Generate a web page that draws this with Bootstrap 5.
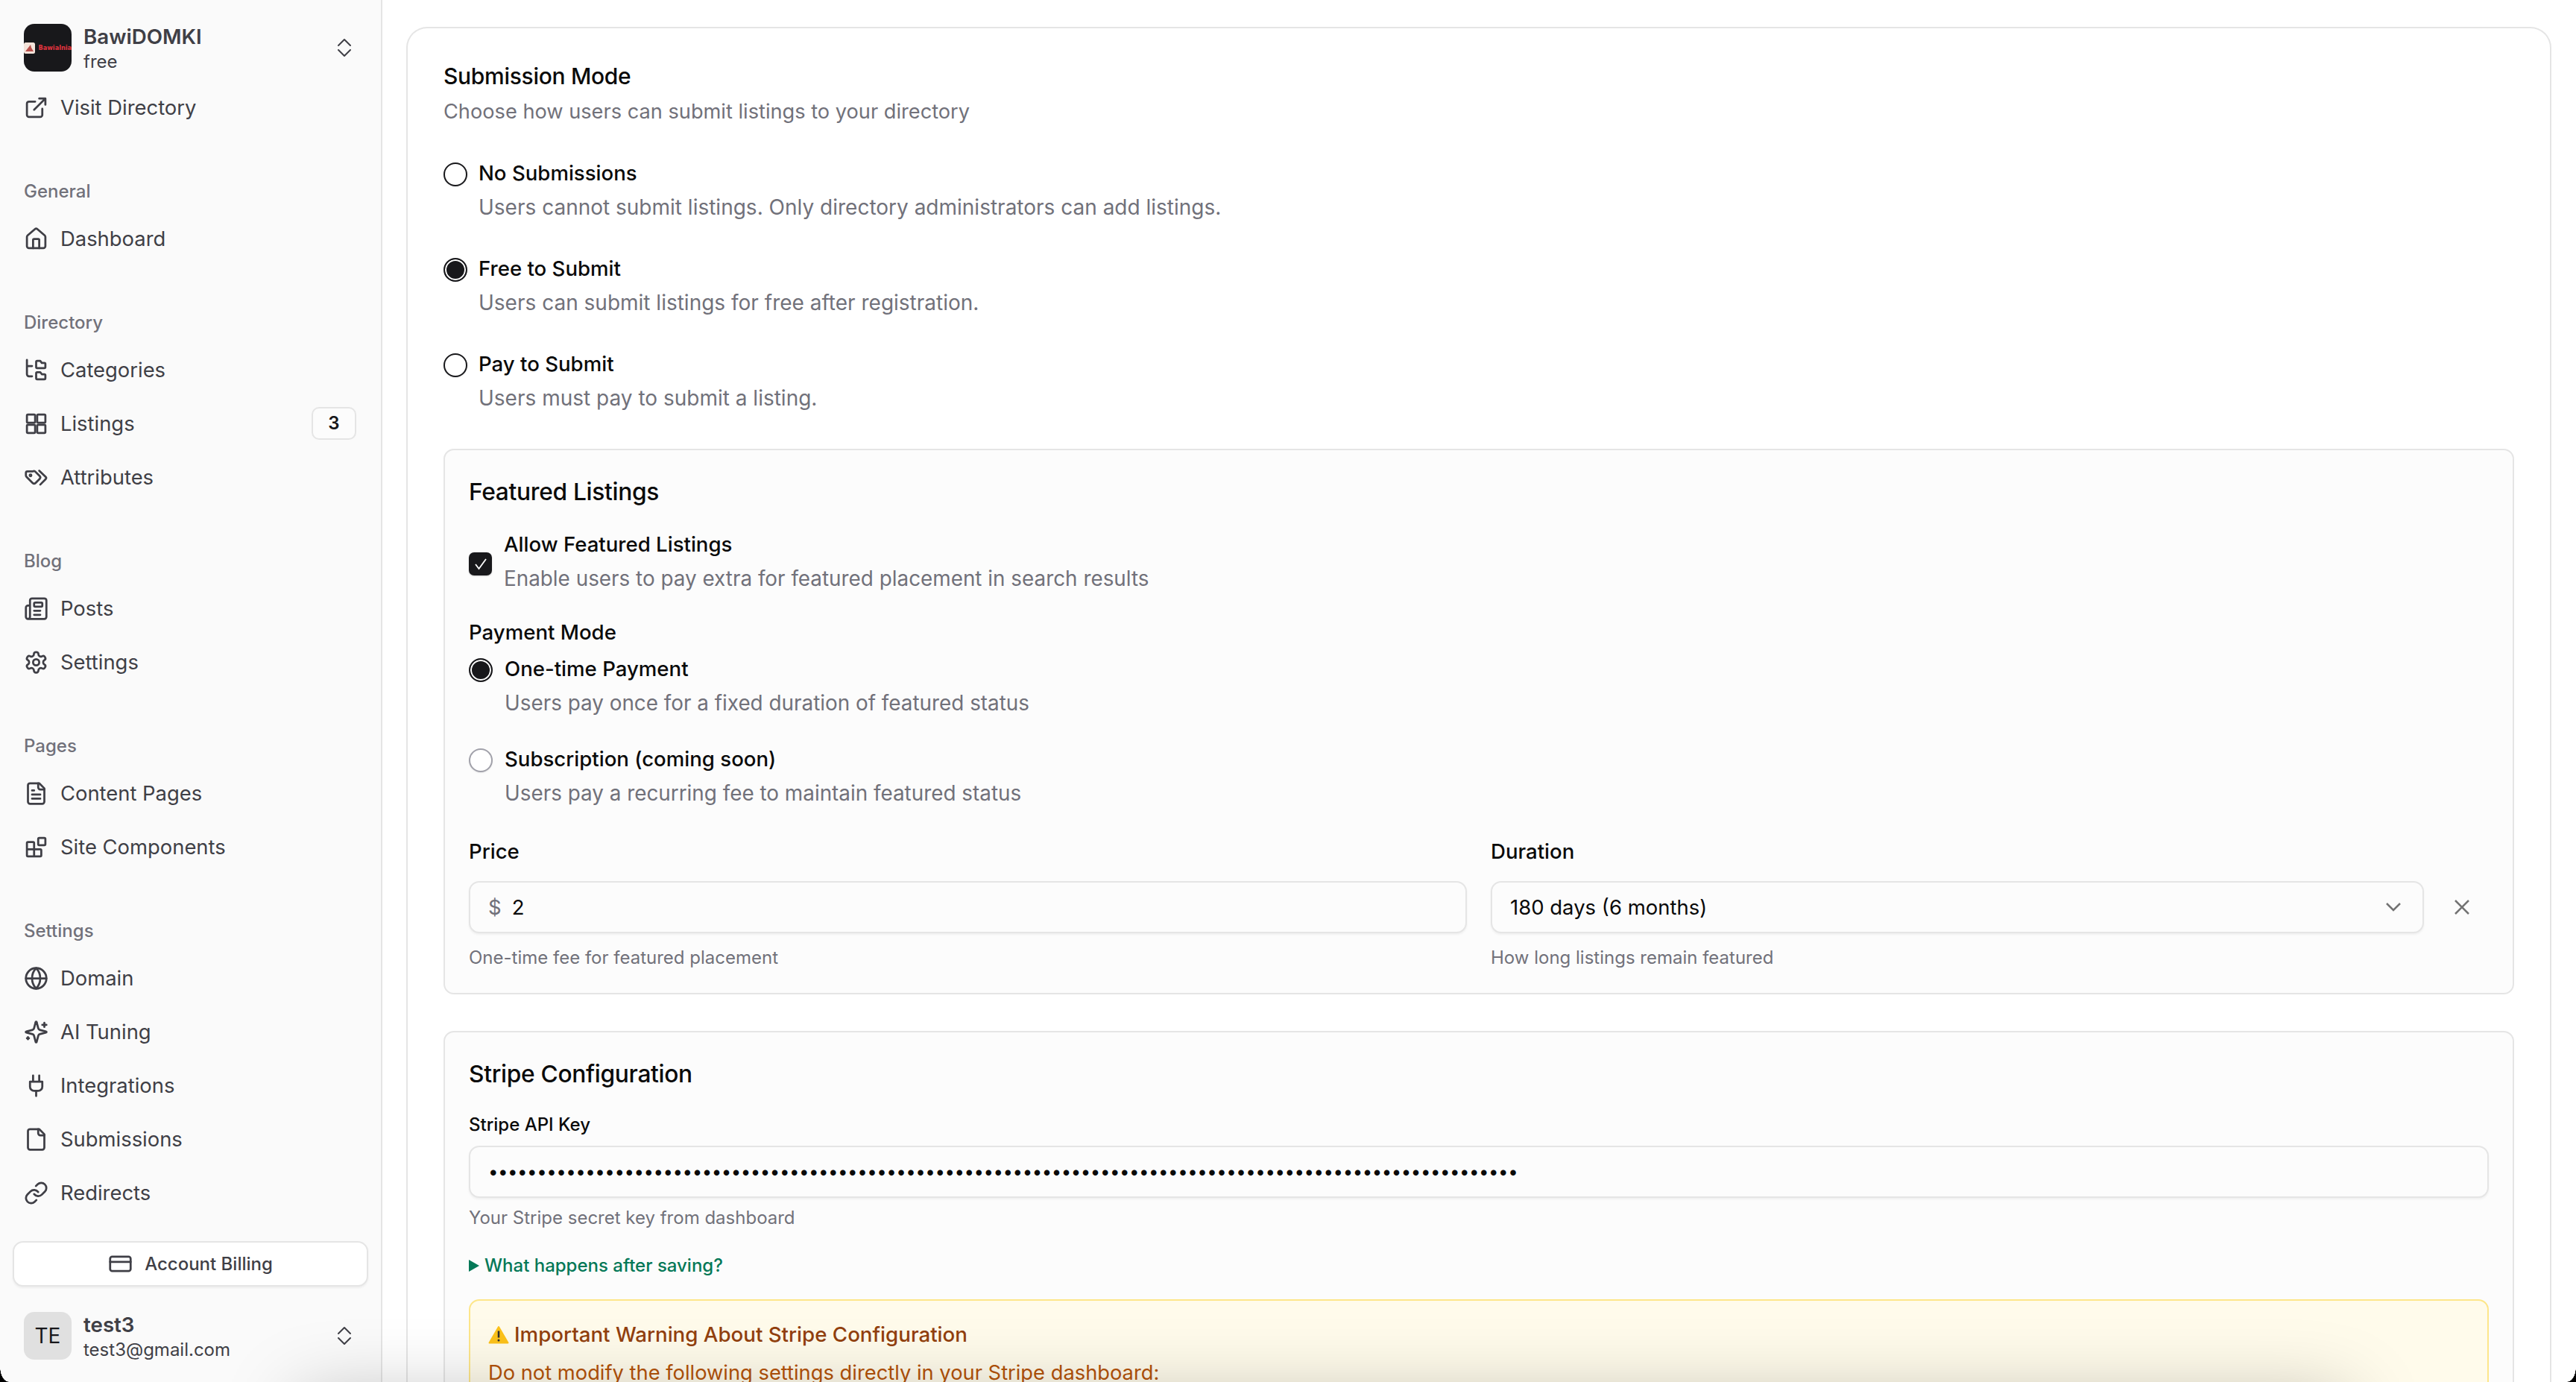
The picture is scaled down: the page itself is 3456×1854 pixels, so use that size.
<!doctype html>
<html lang="en">
<head>
<meta charset="utf-8">
<title>Submission settings</title>
<link href="https://cdn.jsdelivr.net/npm/bootstrap@5.3.0/dist/css/bootstrap.min.css" rel="stylesheet">
<style>
html,body{height:100%;overflow:hidden;}
body{font-family:Inter,"Liberation Sans",sans-serif;font-size:27.85px;line-height:46px;color:#0a0a0a;background:#fff;}
.shell{height:1854px;position:relative;overflow:hidden;}
.rail{width:513px;flex:0 0 513px;background:#fafafa;border-right:2px solid #e5e5e5;padding:32px 32px 30px;color:#3f3f46;}
.rail svg{fill:none;stroke:currentColor;stroke-width:2;stroke-linecap:round;stroke-linejoin:round;}
.who{height:64px;gap:16px;}
.logo-tile{width:64px;height:64px;border-radius:14px;background:#18181b;overflow:hidden;flex:none;}
.logo-tile svg{display:block;stroke:none;}
.logo-text{font-family:"DejaVu Sans",sans-serif;font-weight:700;font-size:8.2px;fill:#e5343f;stroke:none;}
.who-text{padding-top:4px;}
.who-name{font-size:27.7px;font-weight:600;line-height:34px;color:#3f3f46;}
.who-sub{font-size:24px;line-height:34px;color:#3f3f46;}
.nav-row{height:72px;gap:16px;color:#3f3f46;text-decoration:none;font-size:27.4px;}
.nav-row svg{width:33px;height:33px;flex:none;}
.nav-head{height:54px;line-height:54px;font-size:24px;font-weight:500;color:#71717a;margin-top:50px;}
.count-tag{margin-left:auto;width:60px;height:44px;border:2px solid #e5e5e5;border-radius:10px;background:#fcfcfc;font-size:24px;font-weight:600;color:#18181b;margin-right:1px;}
.bill-btn{margin:0 -15px;height:61px;border:2px solid #e5e5e5;border-radius:14px;background:#fff;gap:16px;font-size:24px;font-weight:500;color:#3f3f46;box-shadow:0 2px 3px rgba(0,0,0,.05);}
.bill-btn svg{width:33px;height:33px;}
.initials{width:64px;height:64px;border-radius:14px;background:#e0e0e0;color:#18181b;font-size:28px;flex:none;}
.chev{margin-right:6px;flex:none;}
.stage{flex:1;padding:36px 33px 0 32px;min-width:0;}
.sheet{border:2px solid #e5e5e5;border-bottom:0;border-radius:28px 28px 0 0;padding:41px 48px 0;background:#fff;height:2200px;}
.ttl{font-size:30px;font-weight:550;line-height:46px;letter-spacing:-.3px;margin:0;color:#0a0a0a;}
.sub{color:#71717a;line-height:46px;}
.sub.lead-in{font-size:27.2px;margin-top:2px;margin-bottom:36px;}
.sub.wide{font-size:28px;}
.pick{gap:16px;margin-bottom:36px;}
.pick.first-set{gap:15px;}
.pick:last-child{margin-bottom:0;}
.dot{width:32px;height:32px;border-radius:50%;border:2px solid #18181b;background:#fff;flex:none;margin-top:9px;box-shadow:0 1px 2px rgba(0,0,0,.08);}
.dot.on{background:#18181b;box-shadow:inset 0 0 0 2px #fff;}
.dot.off{border-color:#a1a1aa;}
.pick-name{font-size:27.6px;font-weight:450;line-height:46px;color:#0a0a0a;}
.panel{margin-top:45px;border:2px solid #e5e5e5;border-radius:14px;background:#fcfcfc;padding:33px 32px 32px;}
.panel.one{height:732px;}
.panel.two{margin-top:49px;height:900px;padding-top:33px;}
.panel-ttl{font-size:31.7px;font-weight:500;line-height:46px;margin:0;letter-spacing:-.3px;}
.tick{width:31px;height:31px;border-radius:7px;background:#18181b;flex:none;box-shadow:0 1px 2px rgba(0,0,0,.2);margin-top:6px;}
.tick svg{display:block;}
.pick.tight{gap:16px;margin-bottom:0;}
.field-lbl{font-size:27.6px;font-weight:450;line-height:46px;color:#0a0a0a;}
.box-in{height:70px;border:2px solid #e5e5e5;border-radius:14px;background:#fcfcfc;box-shadow:0 2px 3px rgba(0,0,0,.05);padding:0 24px;font-size:27.5px;}
.box-in.pad-r{padding-right:28px;}
.hint{font-size:24px;line-height:34px;color:#71717a;}
.dollar{color:#71717a;margin-right:14px;}
.close-x{width:32px;height:32px;color:#737373;flex:none;}
.small-lbl{font-size:24px;font-weight:450;line-height:34px;}
.bullets{font-size:24px;letter-spacing:-.47px;line-height:1;color:#0a0a0a;white-space:nowrap;}
.what{font-size:24px;font-weight:500;color:#047857;line-height:34px;}
.tri{display:inline-block;width:0;height:0;border-left:14px solid #047857;border-top:8px solid transparent;border-bottom:8px solid transparent;margin-right:7px;}
.warnbox{margin-top:28px;border:2px solid #fde68a;border-radius:14px;background:#fffbeb;padding:22px 24px;height:300px;}
.warn-ttl{font-size:27.7px;font-weight:450;color:#92400e;line-height:46px;}
.warn-ttl svg{margin-right:7px;}
.warn-txt{font-size:27.3px;color:#b45309;line-height:46px;margin-top:6px;}
.dim{position:absolute;left:400px;width:2750px;top:1874px;height:120px;pointer-events:none;background:rgba(0,0,0,.25);box-shadow:0 0 100px rgba(0,0,0,.25);}
.corner{position:absolute;bottom:0;width:12px;height:20px;pointer-events:none;}
.corner.l{left:0;background:radial-gradient(ellipse 12px 20px at 100% 0,transparent 97%,#000 100%);}
.corner.r{right:0;background:radial-gradient(ellipse 12px 20px at 0 0,transparent 97%,#000 100%);}
</style>
</head>
<body>
<div class="shell d-flex">
<aside class="rail d-flex flex-column">
  <div class="who d-flex align-items-center">
    <div class="logo-tile">
      <svg width="64" height="64" viewBox="0 0 64 64"><rect x="0" y="25" width="15" height="15" rx="2.500" fill="#f3e3da"/><path d="M2 37l7-9 1 4 3 5z" fill="#b9504c"/><text class="logo-text" x="19.500" y="35">Bawialnia</text></svg>
    </div>
    <div class="flex-grow-1 who-text"><div class="who-name">BawiDOMKI</div><div class="who-sub">free</div></div>
    <svg class="chev" width="22" height="26" viewBox="0 0 22 26"><path d="M3 10l8-8 8 8M3 16l8 8 8-8"/></svg>
  </div>
  <a class="nav-row d-flex align-items-center" style="margin-top:12px"><svg viewBox="0 0 24 24"><path d="M18 13v6a2 2 0 0 1-2 2H5a2 2 0 0 1-2-2V8a2 2 0 0 1 2-2h6M15 3h6v6M10 14L21 3"/></svg>Visit Directory</a>

  <div class="nav-head">General</div>
  <a class="nav-row d-flex align-items-center"><svg viewBox="0 0 24 24"><path d="M3 10a2 2 0 0 1 .7-1.500l7-6a2 2 0 0 1 2.600 0l7 6A2 2 0 0 1 21 10v9a2 2 0 0 1-2 2H5a2 2 0 0 1-2-2z"/><path d="M9 21v-8a1 1 0 0 1 1-1h4a1 1 0 0 1 1 1v8"/></svg>Dashboard</a>

  <div class="nav-head">Directory</div>
  <a class="nav-row d-flex align-items-center"><svg viewBox="0 0 24 24"><path d="M3 2v14a2 2 0 0 0 2 2h3M3 8h5"/><path d="M13 3h3l1.500 2H20a1 1 0 0 1 1 1v3a1 1 0 0 1-1 1h-7a1 1 0 0 1-1-1V4a1 1 0 0 1 1-1zM13 14h3l1.500 2H20a1 1 0 0 1 1 1v3a1 1 0 0 1-1 1h-7a1 1 0 0 1-1-1v-5a1 1 0 0 1 1-1z"/></svg>Categories</a>
  <a class="nav-row d-flex align-items-center"><svg viewBox="0 0 24 24"><rect x="3" y="3" width="8" height="8" rx="1"/><rect x="13" y="3" width="8" height="8" rx="1"/><rect x="3" y="13" width="8" height="8" rx="1"/><rect x="13" y="13" width="8" height="8" rx="1"/></svg>Listings<span class="count-tag d-flex align-items-center justify-content-center">3</span></a>
  <a class="nav-row d-flex align-items-center"><svg viewBox="0 0 24 24"><path d="M9 6H3.500A1.500 1.500 0 0 0 2 7.500V10a2 2 0 0 0 .6 1.400l6 6a2 2 0 0 0 2.800 0l4-4a2 2 0 0 0 0-2.800l-4.500-4.500A2 2 0 0 0 9 6z"/><path d="M15 5.500l6.300 6a1.500 1.500 0 0 1 0 2.100L16 19"/><circle cx="6.500" cy="10" r=".8"/></svg>Attributes</a>

  <div class="nav-head">Blog</div>
  <a class="nav-row d-flex align-items-center"><svg viewBox="0 0 24 24"><path d="M4 22h16a2 2 0 0 0 2-2V4a2 2 0 0 0-2-2H8a2 2 0 0 0-2 2v16a2 2 0 0 1-4 0V11a2 2 0 0 1 2-2h2"/><path d="M16 14H10M16 18H10"/><rect x="10" y="6" width="8" height="4" rx="1"/></svg>Posts</a>
  <a class="nav-row d-flex align-items-center"><svg viewBox="0 0 24 24"><path d="M12.220 2h-.44a2 2 0 0 0-2 2v.18a2 2 0 0 1-1 1.730l-.43.25a2 2 0 0 1-2 0l-.15-.08a2 2 0 0 0-2.730.73l-.22.380a2 2 0 0 0 .73 2.730l.15.1a2 2 0 0 1 1 1.720v.510a2 2 0 0 1-1 1.740l-.15.09a2 2 0 0 0-.73 2.730l.22.380a2 2 0 0 0 2.730.73l.15-.08a2 2 0 0 1 2 0l.43.25a2 2 0 0 1 1 1.730V20a2 2 0 0 0 2 2h.44a2 2 0 0 0 2-2v-.18a2 2 0 0 1 1-1.730l.43-.25a2 2 0 0 1 2 0l.15.08a2 2 0 0 0 2.730-.73l.22-.390a2 2 0 0 0-.73-2.730l-.15-.08a2 2 0 0 1-1-1.740v-.500a2 2 0 0 1 1-1.740l.15-.09a2 2 0 0 0 .73-2.730l-.22-.380a2 2 0 0 0-2.730-.73l-.15.08a2 2 0 0 1-2 0l-.43-.25a2 2 0 0 1-1-1.730V4a2 2 0 0 0-2-2z"/><circle cx="12" cy="12" r="3"/></svg>Settings</a>

  <div class="nav-head">Pages</div>
  <a class="nav-row d-flex align-items-center"><svg viewBox="0 0 24 24"><path d="M15 2H6a2 2 0 0 0-2 2v16a2 2 0 0 0 2 2h12a2 2 0 0 0 2-2V7z"/><path d="M14 2v4a2 2 0 0 0 2 2h4M16 13H8M16 17H8M10 9H8"/></svg>Content Pages</a>
  <a class="nav-row d-flex align-items-center"><svg viewBox="0 0 24 24"><rect x="14" y="3" width="7" height="7" rx="1"/><path d="M10 21V8a1 1 0 0 0-1-1H4a1 1 0 0 0-1 1v12a1 1 0 0 0 1 1h12a1 1 0 0 0 1-1v-5a1 1 0 0 0-1-1H3"/></svg>Site Components</a>

  <div class="nav-head">Settings</div>
  <a class="nav-row d-flex align-items-center"><svg viewBox="0 0 24 24"><circle cx="12" cy="12" r="10"/><path d="M12 2a14.500 14.500 0 0 0 0 20 14.500 14.500 0 0 0 0-20M2 12h20"/></svg>Domain</a>
  <a class="nav-row d-flex align-items-center"><svg viewBox="0 0 24 24"><path d="M9.900 15.500A2 2 0 0 0 8.500 14.100l-6.100-1.600a.5.500 0 0 1 0-1l6.100-1.600A2 2 0 0 0 9.900 8.500l1.600-6.100a.5.500 0 0 1 1 0l1.600 6.100a2 2 0 0 0 1.400 1.400l6.100 1.600a.5.500 0 0 1 0 1l-6.100 1.600a2 2 0 0 0-1.400 1.400l-1.600 6.100a.5.500 0 0 1-1 0z"/><path d="M20 3v4M22 5h-4M4 17v2M5 18H3"/></svg>AI Tuning</a>
  <a class="nav-row d-flex align-items-center"><svg viewBox="0 0 24 24"><path d="M12 22v-5M9 8V2M15 8V2M18 8v5a4 4 0 0 1-4 4h-4a4 4 0 0 1-4-4V8z"/></svg>Integrations</a>
  <a class="nav-row d-flex align-items-center"><svg viewBox="0 0 24 24"><path d="M15 2H6a2 2 0 0 0-2 2v16a2 2 0 0 0 2 2h12a2 2 0 0 0 2-2V7z"/><path d="M14 2v4a2 2 0 0 0 2 2h4"/></svg>Submissions</a>
  <a class="nav-row d-flex align-items-center"><svg viewBox="0 0 24 24"><path d="M10 13a5 5 0 0 0 7.540.540l3-3a5 5 0 0 0-7.070-7.070l-1.720 1.710"/><path d="M14 11a5 5 0 0 0-7.540-.540l-3 3a5 5 0 0 0 7.070 7.070l1.710-1.710"/></svg>Redirects</a>

  <div class="mt-auto">
    <div class="bill-btn d-flex align-items-center justify-content-center"><svg viewBox="0 0 24 24"><rect x="2" y="5" width="20" height="14" rx="2"/><path d="M2 10h20"/></svg>Account Billing</div>
    <div class="who d-flex align-items-center" style="margin-top:34px">
      <div class="initials d-flex align-items-center justify-content-center">TE</div>
      <div class="flex-grow-1 who-text"><div class="who-name">test3</div><div class="who-sub">test3@gmail.com</div></div>
      <svg class="chev" width="22" height="26" viewBox="0 0 22 26"><path d="M3 10l8-8 8 8M3 16l8 8 8-8"/></svg>
    </div>
  </div>
</aside>

<main class="stage">
  <div class="sheet">
    <h2 class="ttl">Submission Mode</h2>
    <div class="sub lead-in">Choose how users can submit listings to your directory</div>

    <div>
      <div class="pick first-set d-flex"><span class="dot"></span><div><div class="pick-name">No Submissions</div><div class="sub wide">Users cannot submit listings. Only directory administrators can add listings.</div></div></div>
      <div class="pick first-set d-flex"><span class="dot on"></span><div><div class="pick-name">Free to Submit</div><div class="sub wide">Users can submit listings for free after registration.</div></div></div>
      <div class="pick first-set d-flex"><span class="dot"></span><div><div class="pick-name">Pay to Submit</div><div class="sub wide">Users must pay to submit a listing.</div></div></div>
    </div>

    <section class="panel one">
      <h3 class="panel-ttl" style="margin-bottom:24px">Featured Listings</h3>
      <div class="pick tight d-flex align-items-center"><span class="tick"><svg width="31" height="31" viewBox="0 0 31 31"><path d="M9 16l4.500 6L23 9" fill="none" stroke="#fff" stroke-width="1.800"/></svg></span><div><div class="pick-name">Allow Featured Listings</div><div class="sub">Enable users to pay extra for featured placement in search results</div></div></div>
      <div class="field-lbl" style="margin-top:26px">Payment Mode</div>
      <div class="pick d-flex" style="margin:3px 0 29px"><span class="dot on"></span><div><div class="pick-name">One-time Payment</div><div class="sub">Users pay once for a fixed duration of featured status</div></div></div>
      <div class="pick d-flex" style="margin-bottom:32px"><span class="dot off"></span><div><div class="pick-name">Subscription (coming soon)</div><div class="sub">Users pay a recurring fee to maintain featured status</div></div></div>
      <div class="d-flex align-items-start">
        <div style="width:1339px;margin-right:32px">
          <div class="field-lbl" style="margin-bottom:17px">Price</div>
          <div class="box-in d-flex align-items-center"><span class="dollar">$</span>2</div>
          <div class="hint" style="margin-top:16px">One-time fee for featured placement</div>
        </div>
        <div style="width:1252px">
          <div class="field-lbl" style="margin-bottom:17px">Duration</div>
          <div class="box-in pad-r d-flex align-items-center justify-content-between">180 days (6 months)
            <svg width="22" height="14" viewBox="0 0 22 14" fill="none" stroke="#737373" stroke-width="2.500"><path d="M2 2l9 9 9-9"/></svg></div>
          <div class="hint" style="margin-top:16px">How long listings remain featured</div>
        </div>
        <svg class="close-x ms-auto" style="margin:82px 20px 0 0" viewBox="0 0 32 32" fill="none" stroke="currentColor" stroke-width="2.500"><path d="M7 7l18 18M25 7L7 25"/></svg>
      </div>
    </section>

    <section class="panel two">
      <h3 class="panel-ttl" style="margin-bottom:28px">Stripe Configuration</h3>
      <div class="small-lbl" style="margin-bottom:11px">Stripe API Key</div>
      <div class="box-in d-flex align-items-center"><span class="bullets">••••••••••••••••••••••••••••••••••••••••••••••••••••••••••••••••••••••••••••••••••••••••••••••••••••••••••</span></div>
      <div class="hint" style="margin-top:10px">Your Stripe secret key from dashboard</div>
      <div class="what d-flex align-items-center" style="margin-top:30px"><span class="tri"></span>What happens after saving?</div>
      <div class="warnbox">
        <div class="warn-ttl d-flex align-items-center"><svg width="28" height="25" viewBox="0 0 28 25"><path d="M14 2L26.500 23.500H1.500z" fill="#fcc21b" stroke="#fcc21b" stroke-width="2" stroke-linejoin="round"/><path d="M14 7.500v9" stroke="#2f2f2f" stroke-width="2.500" fill="none"/><circle cx="14" cy="20" r="1.500" fill="#2f2f2f"/></svg>Important Warning About Stripe Configuration</div>
        <div class="warn-txt">Do not modify the following settings directly in your Stripe dashboard:</div>
      </div>
    </section>
  </div>
</main>
<div class="dim"></div>
<div class="corner l"></div>
<div class="corner r"></div>
</div>
<script src="https://cdn.jsdelivr.net/npm/bootstrap@5.3.0/dist/js/bootstrap.bundle.min.js"></script>
</body>
</html>
